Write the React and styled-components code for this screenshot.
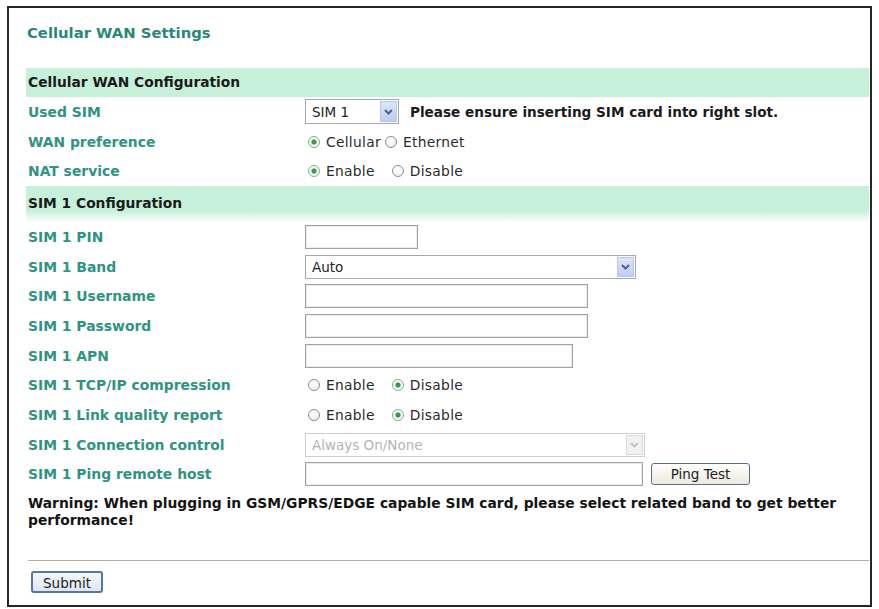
import React from 'react';
import styled, { createGlobalStyle, css } from 'styled-components';

const GlobalStyle = createGlobalStyle`
    html, body {
        margin: 0;
        padding: 0;
        background: #ffffff;
    }
    body {
        font-family: "DejaVu Sans", Verdana, sans-serif;
        color: #1c1c1c;
    }
`;

const Frame = styled.div`
    box-sizing: border-box;
    width: 865px;
    height: 601px;
    margin: 6px 0 0 7px;
    border: 2px solid #262626;
    padding: 0 1px 0 17px;
    display: flex;
    flex-direction: column;
`;

const Title = styled.div`
    margin: 16px 0 26px 1px;
    height: 18px;
    line-height: 18px;
    font-size: 14.8px;
    font-weight: bold;
    color: #2b8777;
`;

const Band = styled.div`
    box-sizing: border-box;
    height: 29px;
    line-height: 29px;
    padding-left: 2px;
    font-size: 13.8px;
    font-weight: bold;
    color: #1a1a1a;
    background: #c7f0da;
    ${p => p.$fade && css`
        height: 36px;
        padding-top: 3px;
        padding-bottom: 4px;
        background: linear-gradient(#c7f0da 0, #c7f0da 25px, #ffffff 36px);
    `}
`;

const Row = styled.div`
    display: grid;
    grid-template-columns: 279px 1fr;
    align-items: center;
    height: 29.7px;
`;

const Label = styled.div`
    padding-left: 2px;
    font-size: 13.9px;
    font-weight: bold;
    color: #2f9381;
    white-space: nowrap;
`;

const Field = styled.div`
    display: flex;
    align-items: center;
    font-size: 13.5px;
    white-space: nowrap;
`;

const Note = styled.span`
    margin-left: 11px;
    font-size: 13.6px;
    font-weight: bold;
    color: #1a1a1a;
`;

const SelectBox = styled.div`
    box-sizing: border-box;
    width: ${p => p.$width}px;
    height: ${p => p.$height || 24}px;
    display: flex;
    align-items: center;
    justify-content: space-between;
    padding: 0 1px 0 6px;
    border: 1px solid ${p => (p.$disabled ? '#cfcfcf' : '#a4a9ad')};
    background: #ffffff;
    color: ${p => (p.$disabled ? '#b4b4b4' : '#222222')};
    font-size: 13.5px;
`;

const Arrow = styled.span`
    box-sizing: border-box;
    width: 17px;
    height: calc(100% - 2px);
    display: flex;
    align-items: center;
    justify-content: center;
    border: 1px solid ${p => (p.$disabled ? '#dadada' : '#b7c6ea')};
    background: ${p => (p.$disabled ? '#f1f1f1' : 'linear-gradient(#dde6fb, #bccdf3)')};
    color: ${p => (p.$disabled ? '#c4c4c4' : '#4d5f8f')};
`;

const TextBox = styled.div`
    box-sizing: border-box;
    width: ${p => p.$width}px;
    height: 24px;
    border: 1px solid #a2a2a2;
    box-shadow: inset 0 0 0 1px #ececec;
    background: #ffffff;
`;

const Options = styled.div`
    display: flex;
    align-items: center;
    gap: ${p => p.$gap}px;
    margin-left: 3px;
    font-size: 13.8px;
    letter-spacing: 0.3px;
`;

const Option = styled.label`
    display: flex;
    align-items: center;
    gap: 6px;
    color: #2a2a2a;
`;

const Radio = styled.span`
    box-sizing: border-box;
    width: 12px;
    height: 12px;
    border-radius: 50%;
    border: 1px solid #8e8e8e;
    background: radial-gradient(circle at 40% 35%, #ffffff, #e9e9e9);
    ${p => p.$on && css`
        border-color: #7fae86;
        background: radial-gradient(circle, #3d9a4e 0, #3d9a4e 2.3px, #d8f0dc 2.8px, #ffffff 5px);
    `}
`;

const Button = styled.button`
    box-sizing: border-box;
    height: 22px;
    padding: 0;
    border: 1px solid #5b6e84;
    border-radius: 3px;
    background: linear-gradient(#ffffff, #ece9df);
    font-family: "DejaVu Sans", Verdana, sans-serif;
    font-size: 13.5px;
    color: #222222;
    line-height: 20px;
`;

const PingButton = styled(Button)`
    margin-left: 8px;
    width: 99px;
`;

const SubmitButton = styled(Button)`
    width: 72px;
    border: 2px solid #5478a3;
    background: linear-gradient(#f4f7fb, #dfe7f1);
`;

const Warning = styled.p`
    margin: 6px 0 0 2px;
    font-size: 13.85px;
    font-weight: bold;
    line-height: 17px;
    color: #141414;
`;

const Rule = styled.div`
    margin: 31px 0 10px 2px;
    height: 1px;
    background: #b0ada4;
`;

const Footer = styled.div`
    padding-left: 5px;
`;

function Chevron () {
    return (
        <svg width="9" height="6" viewBox="0 0 9 6">
            <path d="M1 1 L4.5 4.5 L8 1" fill="none" stroke="currentColor" strokeWidth="2" />
        </svg>
    );
}

function Select ({ value, width, height, disabled }) {
    return (
        <SelectBox $width={width} $height={height} $disabled={disabled}>
            <span>{value}</span>
            <Arrow $disabled={disabled}><Chevron /></Arrow>
        </SelectBox>
    );
}

function RadioPair ({ options, checked, gap = 17 }) {
    return (
        <Options $gap={gap}>
            {options.map(opt => (
                <Option key={opt}>
                    <Radio $on={opt === checked} />
                    {opt}
                </Option>
            ))}
        </Options>
    );
}

const onOff = ['Enable', 'Disable'];

function App () {
    return (
        <>
            <GlobalStyle />
            <Frame>
                <Title>Cellular WAN Settings</Title>

                <Band>Cellular WAN Configuration</Band>
                <Row>
                    <Label>Used SIM</Label>
                    <Field>
                        <Select value="SIM 1" width={94} height={25} />
                        <Note>Please ensure inserting SIM card into right slot.</Note>
                    </Field>
                </Row>
                <Row>
                    <Label>WAN preference</Label>
                    <Field><RadioPair options={['Cellular', 'Ethernet']} checked="Cellular" gap={4} /></Field>
                </Row>
                <Row>
                    <Label>NAT service</Label>
                    <Field><RadioPair options={onOff} checked="Enable" /></Field>
                </Row>

                <Band $fade>SIM 1 Configuration</Band>
                <Row>
                    <Label>SIM 1 PIN</Label>
                    <Field><TextBox $width={113} /></Field>
                </Row>
                <Row>
                    <Label>SIM 1 Band</Label>
                    <Field><Select value="Auto" width={331} /></Field>
                </Row>
                <Row>
                    <Label>SIM 1 Username</Label>
                    <Field><TextBox $width={283} /></Field>
                </Row>
                <Row>
                    <Label>SIM 1 Password</Label>
                    <Field><TextBox $width={283} /></Field>
                </Row>
                <Row>
                    <Label>SIM 1 APN</Label>
                    <Field><TextBox $width={268} /></Field>
                </Row>
                <Row>
                    <Label>SIM 1 TCP/IP compression</Label>
                    <Field><RadioPair options={onOff} checked="Disable" /></Field>
                </Row>
                <Row>
                    <Label>SIM 1 Link quality report</Label>
                    <Field><RadioPair options={onOff} checked="Disable" /></Field>
                </Row>
                <Row>
                    <Label>SIM 1 Connection control</Label>
                    <Field><Select value="Always On/None" width={340} disabled /></Field>
                </Row>
                <Row>
                    <Label>SIM 1 Ping remote host</Label>
                    <Field>
                        <TextBox $width={338} />
                        <PingButton>Ping Test</PingButton>
                    </Field>
                </Row>

                <Warning>
                    Warning: When plugging in GSM/GPRS/EDGE capable SIM card, please select related band to get better performance!
                </Warning>
                <Rule />
                <Footer>
                    <SubmitButton>Submit</SubmitButton>
                </Footer>
            </Frame>
        </>
    );
}

export default App;
